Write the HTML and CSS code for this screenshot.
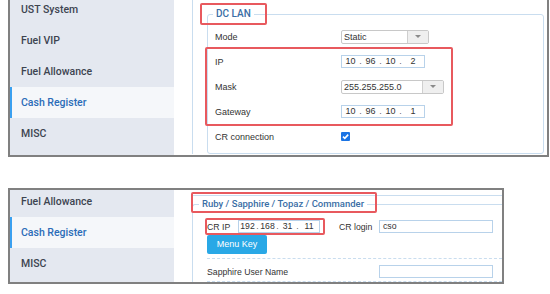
FILE: index.html
```html
<!DOCTYPE html>
<html lang="en">
<head>
  <meta charset="UTF-8">
  <title>Cash Register settings</title>
  <link rel="stylesheet" href="styles.css">
</head>
<body>
  <!-- DC LAN -->
  <section class="panel panel-top">
    <nav class="nav">
      <div class="nav-item">UST System</div>
      <div class="nav-item">Fuel VIP</div>
      <div class="nav-item">Fuel Allowance</div>
      <div class="nav-item active">Cash Register</div>
      <div class="nav-item">MISC</div>
    </nav>
    <div class="main">
      <div class="group">
        <fieldset class="box box-lan">
          <legend class="mark mark-lan">DC LAN</legend>
          <div class="row">
            <label>Mode</label>
            <div class="select select-mode"><span>Static</span><i></i></div>
          </div>
          <div class="hl-rows mark">
            <div class="row">
              <label>IP</label>
              <div class="ip"><span>10</span><b>.</b><span>96</span><b>.</b><span>10</span><b>.</b><span>2</span></div>
            </div>
            <div class="row">
              <label>Mask</label>
              <div class="select select-mask"><span>255.255.255.0</span><i></i></div>
            </div>
            <div class="row">
              <label>Gateway</label>
              <div class="ip"><span>10</span><b>.</b><span>96</span><b>.</b><span>10</span><b>.</b><span>1</span></div>
            </div>
          </div>
          <div class="row">
            <label>CR connection</label>
            <span class="check"><svg width="9" height="9" viewBox="0 0 9 9"><polyline points="2,4.6 3.8,6.4 7.2,2.6" fill="none" stroke="#fff" stroke-width="1.6"/></svg></span>
          </div>
        </fieldset>
      </div>
    </div>
  </section>

  <!-- Ruby / Sapphire -->
  <section class="panel panel-bottom">
    <nav class="nav nav-cut">
      <div class="nav-item">Fuel Allowance</div>
      <div class="nav-item active">Cash Register</div>
      <div class="nav-item">MISC</div>
    </nav>
    <div class="main">
      <div class="prev"></div>
      <fieldset class="box box-ruby">
        <legend class="mark mark-ruby">Ruby / Sapphire / Topaz / Commander</legend>
        <div class="inner">
          <div class="row2">
            <div class="mark mark-ip">
              <label class="lbl-ip">CR IP</label>
              <div class="ip ip-cr"><span>192</span><b>.</b><span>168</span><b>.</b><span>31</span><b>.</b><span>11</span></div>
            </div>
            <label class="lbl-login">CR login</label>
            <div class="field">cso</div>
          </div>
          <button class="btn">Menu Key</button>
          <div class="dash"></div>
          <div class="row2 row-user">
            <label class="lbl-user">Sapphire User Name</label>
            <div class="field"></div>
          </div>
          <div class="dash dash-last"></div>
        </div>
      </fieldset>
    </div>
  </section>
</body>
</html>
```

FILE: styles.css
```css
body { margin: 0; background: #fff; font-family: "Liberation Sans", Arial, sans-serif; font-size: 9px; color: #333; }

.panel { display: flex; margin-left: 8px; border: 2px solid #808080; box-sizing: border-box; overflow: hidden; }
.panel-top { width: 541px; border-top: none; margin-top: -6px; }
.panel-bottom { width: 496px; margin-top: 31px; }

/* sidebar */
.nav { width: 164px; flex-shrink: 0; background: #e4e8f0; font-family: Roboto, "Liberation Sans", sans-serif; font-weight: 500; font-size: 10.5px; color: #3d4450; }
.nav-cut { margin-top: -4px; }
.nav-item { height: 31px; line-height: 31px; padding-left: 11px; }
.nav-item.active { background: #f5f7fa; color: #2b6cb8; box-shadow: inset 2px 0 #3aa0f0; }

.main { flex: 1; min-width: 0; padding-left: 18px; }
.panel-top .main { padding-bottom: 1px; }
.group { border-left: 1px solid #c9ddef; padding: 14px 3px 0 14px; }

/* fieldsets */
.box { margin: 0; padding: 4px 0; border: 1px solid #c9ddef; border-radius: 3px; min-width: 0; }
.box legend { padding: 0 3px; line-height: 12px; font-family: Roboto, "Liberation Sans", sans-serif; font-weight: 500; font-size: 10px; color: #3a6ea5; }
.box-lan legend { margin-left: 5px; }
.box-ruby { margin-top: 2px; padding: 0; border-right: none; border-bottom: none; border-radius: 3px 0 0 0; }
.box-ruby legend { margin-left: 6px; font-size: 9.5px; }
.prev { height: 5px; border-bottom: 1px solid #c9ddef; }

/* red annotation boxes */
.mark { position: relative; }
.mark::after { content: ""; position: absolute; border: 2px solid #e8595e; border-radius: 2px; pointer-events: none; }
.mark-lan::after { top: -5px; right: -13px; bottom: -5px; left: -13px; }
.mark-ruby::after { top: -6px; right: -10px; bottom: -3px; left: -8px; }
.hl-rows { width: 244px; }
.hl-rows::after { top: -2px; right: -1px; bottom: -2px; left: -3px; }
.mark-ip::after { top: -2px; right: -2px; bottom: -2px; left: -2px; }

/* rows */
.row { display: flex; align-items: center; height: 25px; padding-left: 7px; }
.row label { width: 126px; flex-shrink: 0; }

.select { display: flex; height: 14px; border: 1px solid #c8c8c8; border-radius: 2px; box-sizing: border-box; }
.select span { flex: 1; padding-left: 2px; line-height: 12px; }
.select i { width: 20px; background: #efefef; border-left: 1px solid #cfcfcf; display: flex; align-items: center; justify-content: center; }
.select i::after { content: ""; border-left: 3px solid transparent; border-right: 3px solid transparent; border-top: 3px solid #8a8a8a; }
.select-mode { width: 88px; }
.select-mask { width: 103px; }

.ip { display: flex; height: 13px; border: 1px solid #b8d2ea; box-sizing: border-box; width: 84px; line-height: 11px; }
.ip span { width: 17px; text-align: center; }
.ip span:last-child { flex: 1; }
.ip b { width: 3px; font-weight: normal; text-align: center; color: #666; }
.ip-cr { width: 82px; }

.check { width: 9px; height: 9px; background: #1b74e4; border-radius: 1px; display: flex; }

.inner { padding: 10px 0 0 14px; font-size: 8.7px; }
.row2 { display: flex; align-items: center; height: 13px; }
.mark-ip { display: flex; align-items: center; height: 13px; padding-right: 3px; }
.lbl-ip { width: 31px; }
.lbl-login { margin-left: 16px; width: 40px; }
.lbl-user { width: 172px; }
.field { width: 114px; height: 13px; border: 1px solid #b8d2ea; box-sizing: border-box; padding-left: 3px; line-height: 11px; }

.btn { display: block; margin-top: 2px; width: 60px; height: 19px; padding: 0; border: none; border-radius: 2px; background: #29a8e6; color: #fff; font-family: "Liberation Sans", Arial, sans-serif; font-size: 9px; line-height: 19px; }
.dash { border-top: 1px dashed #c9ddef; margin-top: 4px; }
.row-user { margin-top: 6px; }
.dash-last { margin-top: 3px; }
```
